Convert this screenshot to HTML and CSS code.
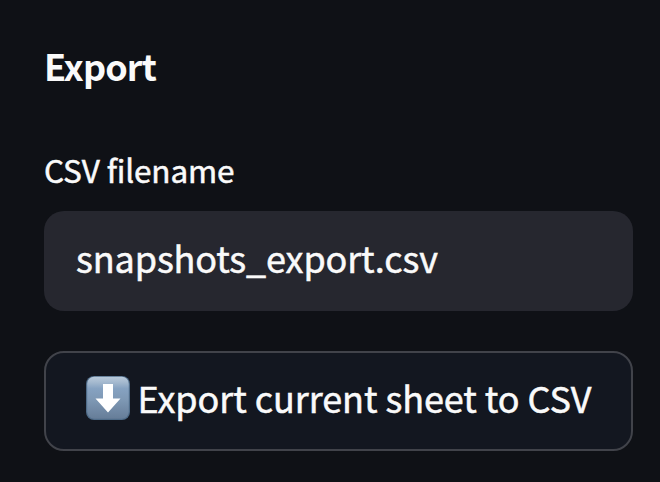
FILE: index.html
```html
<!DOCTYPE html>
<html lang="en">
<head>
<meta charset="utf-8">
<title>Export</title>
<link rel="stylesheet" href="styles.css">
</head>
<body>
<main class="panel">
  <h2 class="title">Export</h2>
  <label class="label" for="filename">CSV filename</label>
  <input class="field" id="filename" type="text" value="snapshots_export.csv" spellcheck="false">
  <button class="button" type="button">
    <svg class="icon" viewBox="0 0 46 46" aria-hidden="true">
      <defs>
        <linearGradient id="face" x1="0" y1="0" x2="0" y2="1">
          <stop offset="0" stop-color="#b9cadb"/>
          <stop offset="0.14" stop-color="#a3b8ce"/>
          <stop offset="0.28" stop-color="#86a2c1"/>
          <stop offset="0.55" stop-color="#7e98b4"/>
          <stop offset="1" stop-color="#667d98"/>
        </linearGradient>
      </defs>
      <rect x="1" y="1" width="44" height="44" rx="8" fill="#4f6c89"/>
      <rect x="2.200" y="1.800" width="41.600" height="42" rx="7" fill="url(#face)"/>
      <path d="M18 9h10v14.500h7.500L23 37.500 10.500 23.500H18z" fill="#fff"/>
    </svg>
    <span class="caption">Export current sheet to CSV</span>
  </button>
</main>
</body>
</html>
```
FILE: styles.css
```css
* { box-sizing: border-box; }
body {
  margin: 0;
  background: #0f1116;
  color: #fafafa;
  font-family: "Noto Sans CJK SC", "Noto Sans", sans-serif;
  -webkit-text-stroke: 0.5px currentColor;
}
.panel {
  display: flex;
  flex-direction: column;
  padding: 41px 27px 31px 44px;
  height: 482px;
}
.title {
  margin: 0;
  font-size: 36px;
  line-height: 48px;
  font-weight: 700;
  letter-spacing: -0.9px;
  -webkit-text-stroke: 0;
}
.label {
  margin-top: 56px;
  font-size: 31.5px;
  line-height: 48px;
  letter-spacing: -0.14px;
}
.field {
  width: 589px;
  height: 100px;
  margin-top: 18px;
  padding: 0 32px 8px;
  border: 0;
  border-radius: 20px;
  background: #26272f;
  color: #fafafa;
  font: 36px/56px "Noto Sans CJK SC", "Noto Sans", sans-serif;
  letter-spacing: -0.13px;
  outline: none;
}
.button {
  display: flex;
  align-items: center;
  gap: 7px;
  width: 589px;
  height: 100px;
  margin-top: 40px;
  padding: 0 38.5px 6px;
  border: 2px solid #41434a;
  border-radius: 20px;
  background: #131720;
  color: #fafafa;
  font: 36px/56px "Noto Sans CJK SC", "Noto Sans", sans-serif;
  letter-spacing: -0.07px;
}
.icon {
  flex: none;
  width: 46px;
  height: 46px;
}
.caption {
  margin-bottom: 3px;
  white-space: nowrap;
}
```
